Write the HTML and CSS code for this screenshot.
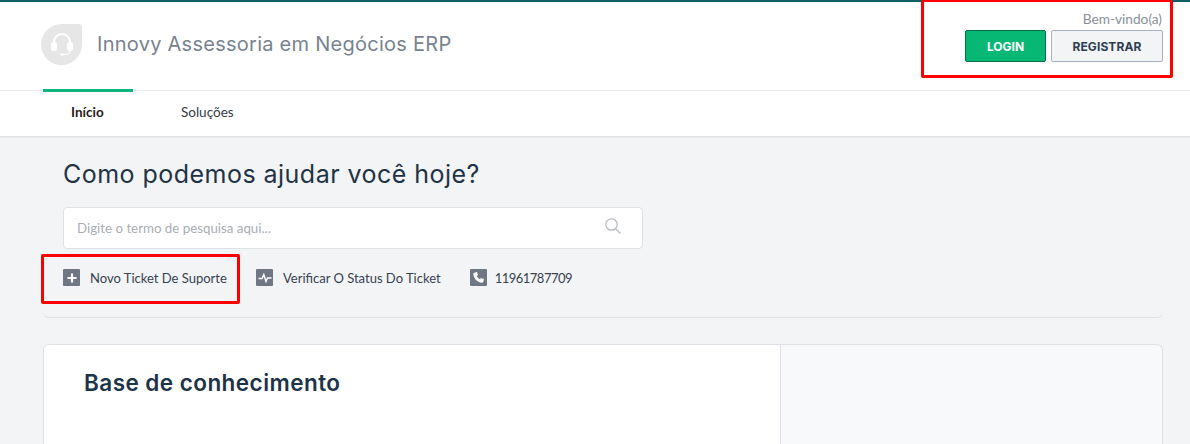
FILE: index.html
```html
<!DOCTYPE html>
<html lang="pt-BR">
<head>
    <meta charset="UTF-8">
    <meta name="viewport" content="width=device-width, initial-scale=1.0">
    <title>Innovy Assessoria em Negócios ERP</title>
    <link rel="stylesheet" href="styles.css">
</head>
<body>
    <header class="topbar">
        <div class="brand">
            <div class="brand-logo">
                <svg width="24" height="26" viewBox="0 0 24 26" fill="none">
                    <path d="M4 13V10a8 8 0 0 1 16 0v3" stroke="#fff" stroke-width="2"/>
                    <rect x="1" y="10" width="6" height="9" rx="2.5" fill="#fff"/>
                    <rect x="17" y="10" width="6" height="9" rx="2.5" fill="#fff"/>
                    <path d="M20 19c0 2.500-2 3.500-5 3.500" stroke="#fff" stroke-width="1.200"/>
                    <rect x="10" y="21.500" width="5" height="2" rx="1" fill="#fff"/>
                </svg>
            </div>
            <span class="brand-name">Innovy Assessoria em Negócios ERP</span>
        </div>
        <div class="user-box">
            <span class="welcome">Bem-vindo(a)</span>
            <div class="user-actions">
                <a class="btn btn-login">LOGIN</a>
                <a class="btn btn-register">REGISTRAR</a>
            </div>
        </div>
    </header>

    <nav class="tabs">
        <a class="tab active">Início</a>
        <a class="tab">Soluções</a>
    </nav>

    <main class="content">
        <section class="help">
            <h1>Como podemos ajudar você hoje?</h1>
            <div class="search">
                <span class="search-text">Digite o termo de pesquisa aqui...</span>
                <svg width="18" height="18" viewBox="0 0 18 18" fill="none" stroke="#b4b8c0" stroke-width="1.200">
                    <circle cx="7.500" cy="7.500" r="5.700"/>
                    <path d="M11.800 11.800 16.500 16.500"/>
                </svg>
            </div>
            <div class="quick-links">
                <a class="quick-link first">
                    <span class="quick-icon">
                        <svg width="10" height="10" viewBox="0 0 10 10"><path d="M5 0.500v9M0.500 5h9" stroke="#fff" stroke-width="2.200"/></svg>
                    </span>
                    Novo Ticket De Suporte
                </a>
                <a class="quick-link status">
                    <span class="quick-icon">
                        <svg width="14" height="10" viewBox="0 0 14 10" fill="none"><path d="M0.500 5.500H4L5.800 1.500 8 8.500 9.500 5H13.500" stroke="#fff" stroke-width="1.400"/></svg>
                    </span>
                    Verificar O Status Do Ticket
                </a>
                <a class="quick-link phone">
                    <span class="quick-icon">
                        <svg width="11" height="11" viewBox="0 0 11 11"><path d="M2.200 0.500 4 0.100 5 3 3.700 4.100C4.300 5.400 5.400 6.600 6.800 7.300L8 6l2.900 1-.4 2C10.300 10.200 9.600 10.800 8.800 10.700 4.300 10.100 0.800 6.500 0.300 2.200 0.200 1.400 1.200 0.700 2.200 0.500Z" fill="#fff"/></svg>
                    </span>
                    11961787709
                </a>
            </div>
        </section>

        <section class="card">
            <div class="card-main">
                <h2>Base de conhecimento</h2>
            </div>
            <div class="card-side"></div>
        </section>
    </main>
</body>
</html>
```

FILE: styles.css
```css
* {
    box-sizing: border-box;
}
html, body {
    height: 444px;
    overflow: hidden;
}
body {
    margin: 0;
    background: #f3f4f6;
    font-family: 'Lato', 'Noto Sans', sans-serif;
    color: #2c3e50;
}
.topbar {
    display: flex;
    justify-content: space-between;
    height: 91px;
    background: #fff;
    border-top: 2px solid #0f5f63;
    border-bottom: 1px solid #e8e9ec;
    padding: 0 17px 0 41px;
}
.brand {
    display: flex;
    align-items: center;
    gap: 15px;
    padding-bottom: 3px;
}
.brand-logo {
    display: flex;
    align-items: center;
    justify-content: center;
    width: 41px;
    height: 41px;
    background: #e6e6e6;
    border-radius: 50% 4px 50% 50%;
}
.brand-name {
    font-family: 'Inter', sans-serif;
    font-size: 20px;
    line-height: 24px;
    letter-spacing: 0.26px;
    color: #77838f;
    margin-top: -1px;
}
.user-box {
    display: flex;
    flex-direction: column;
    align-items: flex-end;
    width: 252px;
    height: 78px;
    margin-top: -2px;
    padding: 9px 7px 0 0;
    border: 3px solid #f00;
    border-top-width: 2px;
    border-radius: 2px;
}
.welcome {
    font-size: 13.700px;
    line-height: 16px;
    color: #8a8f96;
    margin: 0 1px 3px 0;
}
.user-actions {
    display: flex;
    gap: 5px;
}
.btn {
    display: flex;
    align-items: center;
    justify-content: center;
    height: 32px;
    font-family: 'Inter', sans-serif;
    font-size: 12px;
    font-weight: 700;
    border-radius: 2px;
}
.btn-login {
    width: 81px;
    background: #07b875;
    border: 1px solid #056b48;
    color: #fff;
}
.btn-register {
    width: 112px;
    background: #f3f4f6;
    border: 1px solid #a5b1c2;
    color: #2c3e50;
    letter-spacing: 0.1px;
}
.tabs {
    display: flex;
    gap: 20px;
    height: 46px;
    padding-left: 43px;
    background: #fff;
    border-bottom: 1px solid #e3e4e8;
    box-shadow: 0 1px 2px rgba(0,0,0,0.05);
}
.tab {
    position: relative;
    top: -2px;
    height: 48px;
    padding: 12px 28px 0;
    font-size: 13.500px;
    color: #333a45;
    border-top: 3px solid transparent;
}
.tab.active {
    width: 90px;
    border-top-color: #0db67a;
    font-weight: 700;
    color: #2a1a1a;
}
.content {
    padding: 0 27px 0 43px;
}
.help {
    height: 181px;
    border-bottom: 1px solid #dfe1e6;
    border-radius: 0 0 6px 6px;
}
h1 {
    margin: 0;
    padding: 21px 0 0 20px;
    font-family: 'Inter', sans-serif;
    font-size: 25px;
    line-height: 32px;
    font-weight: 400;
    letter-spacing: 0.47px;
    color: #1f3347;
}
.search {
    display: flex;
    align-items: center;
    justify-content: space-between;
    width: 580px;
    height: 42px;
    margin: 17px 0 0 20px;
    padding: 0 20px 4px 13px;
    background: #fff;
    border: 1px solid #dfe1e6;
    border-radius: 4px;
}
.search-text {
    font-size: 13.300px;
    color: #a9adb3;
    padding-top: 4px;
}
.quick-links {
    display: flex;
    margin: 5px 0 0 -2px;
}
.quick-link {
    display: flex;
    align-items: center;
    gap: 10px;
    height: 50px;
    padding: 0 11px 3px 19px;
    font-size: 13px;
    white-space: nowrap;
    color: #38424f;
    border: 3px solid transparent;
    border-radius: 2px;
}
.quick-link.first {
    border-color: #f00;
    width: 199px;
}
.quick-link.status {
    padding: 0 10px 3px 13px;
}
.quick-link.phone {
    gap: 8px;
    padding-left: 13px;
    letter-spacing: -0.5px;
}
.quick-icon {
    display: flex;
    align-items: center;
    justify-content: center;
    width: 17px;
    height: 17px;
    background: #6e7783;
    flex-shrink: 0;
    border-radius: 1px;
}
.card {
    display: flex;
    height: 100px;
    margin-top: 26px;
    background: #f8f9fb;
    border: 1px solid #dfe1e6;
    border-bottom: none;
    border-radius: 6px 6px 0 0;
    overflow: hidden;
}
.card-main {
    width: 737px;
    background: #fff;
    border-right: 1px solid #dfe1e6;
    padding: 25px 0 0 40px;
}
h2 {
    margin: 0;
    font-family: 'Inter', sans-serif;
    font-size: 22.500px;
    line-height: 26px;
    font-weight: 600;
    letter-spacing: 0.45px;
    color: #1d3347;
}
```
